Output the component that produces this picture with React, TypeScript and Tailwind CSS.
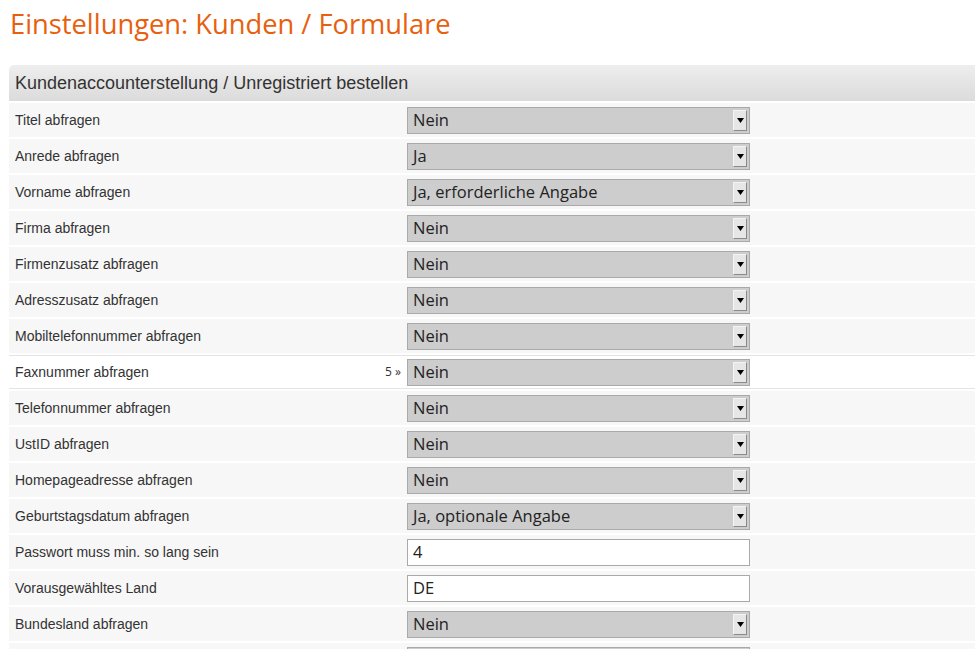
type Row = {
  label: string;
  value: string;
  kind?: "select" | "input";
  hint?: string;
  active?: boolean;
};

const rows: Row[] = [
  { label: "Titel abfragen", value: "Nein" },
  { label: "Anrede abfragen", value: "Ja" },
  { label: "Vorname abfragen", value: "Ja, erforderliche Angabe" },
  { label: "Firma abfragen", value: "Nein" },
  { label: "Firmenzusatz abfragen", value: "Nein" },
  { label: "Adresszusatz abfragen", value: "Nein" },
  { label: "Mobiltelefonnummer abfragen", value: "Nein" },
  { label: "Faxnummer abfragen", value: "Nein", hint: "5 »", active: true },
  { label: "Telefonnummer abfragen", value: "Nein" },
  { label: "UstID abfragen", value: "Nein" },
  { label: "Homepageadresse abfragen", value: "Nein" },
  { label: "Geburtstagsdatum abfragen", value: "Ja, optionale Angabe" },
  { label: "Passwort muss min. so lang sein", value: "4", kind: "input" },
  { label: "Vorausgewähltes Land", value: "DE", kind: "input" },
  { label: "Bundesland abfragen", value: "Nein" },
  // next row is only partly in view; its texts fall below the fold
  { label: "", value: "" },
];

function SelectBox({ value }: { value: string }) {
  return (
    <div className="flex h-[27px] w-[343px] items-center justify-between border border-[#a9a9a9] bg-[#cdcdcd] pl-[5px] pr-[2px]">
      <span className="text-[16.5px] text-[#222] font-['Open_Sans',sans-serif]">{value}</span>
      <span className="flex h-[21px] w-[14px] items-center justify-center border border-[#f4f4f4] border-r-[#8a8a8a] border-b-[#8a8a8a] bg-[#e6e6e6]">
        <svg width="7" height="5" viewBox="0 0 7 5">
          <path d="M0 0h7L3.5 5z" fill="#000" />
        </svg>
      </span>
    </div>
  );
}

function InputBox({ value }: { value: string }) {
  return (
    <div className="flex h-[27px] w-[343px] items-center border border-[#a9a9a9] bg-white px-[5px]">
      <span className="text-[16.5px] text-[#222] font-['Open_Sans',sans-serif]">{value}</span>
    </div>
  );
}

export default function App() {
  return (
    <div className="h-[649px] w-full overflow-hidden bg-white font-['Liberation_Sans',Arial,sans-serif]">
      {/* Title */}
      <h1 className="pl-[10px] pt-[7px] text-[27.3px] leading-[34px] text-[#e8600e] font-['Open_Sans',sans-serif]">
        Einstellungen: Kunden / Formulare
      </h1>

      <div className="ml-[9px] mt-[24px]">
        {/* Section header */}
        <div className="flex h-[36px] items-center rounded-tl-[5px] bg-gradient-to-b from-[#eeeeee] to-[#dbdbdb] pl-[6px] pt-[1px] text-[18px] text-[#333]">
          Kundenaccounterstellung / Unregistriert bestellen
        </div>

        <div className="mt-[2px] flex flex-col gap-[2px]">
          {rows.map((r, i) => (
            <div
              key={i}
              className={`flex h-[34px] items-center ${r.active ? "bg-white border-y border-[#e4e4e4]" : "bg-[#f7f7f7]"}`}
            >
              <div className="flex w-[398px] items-center justify-between pl-[6px] pr-[6px] text-[14px] text-[#333]">
                <span>{r.label}</span>
                {r.hint && <span className="text-[12px] text-[#333] font-['Open_Sans',sans-serif]">{r.hint}</span>}
              </div>
              {r.kind === "input" ? <InputBox value={r.value} /> : <SelectBox value={r.value} />}
            </div>
          ))}
        </div>
      </div>
    </div>
  );
}
